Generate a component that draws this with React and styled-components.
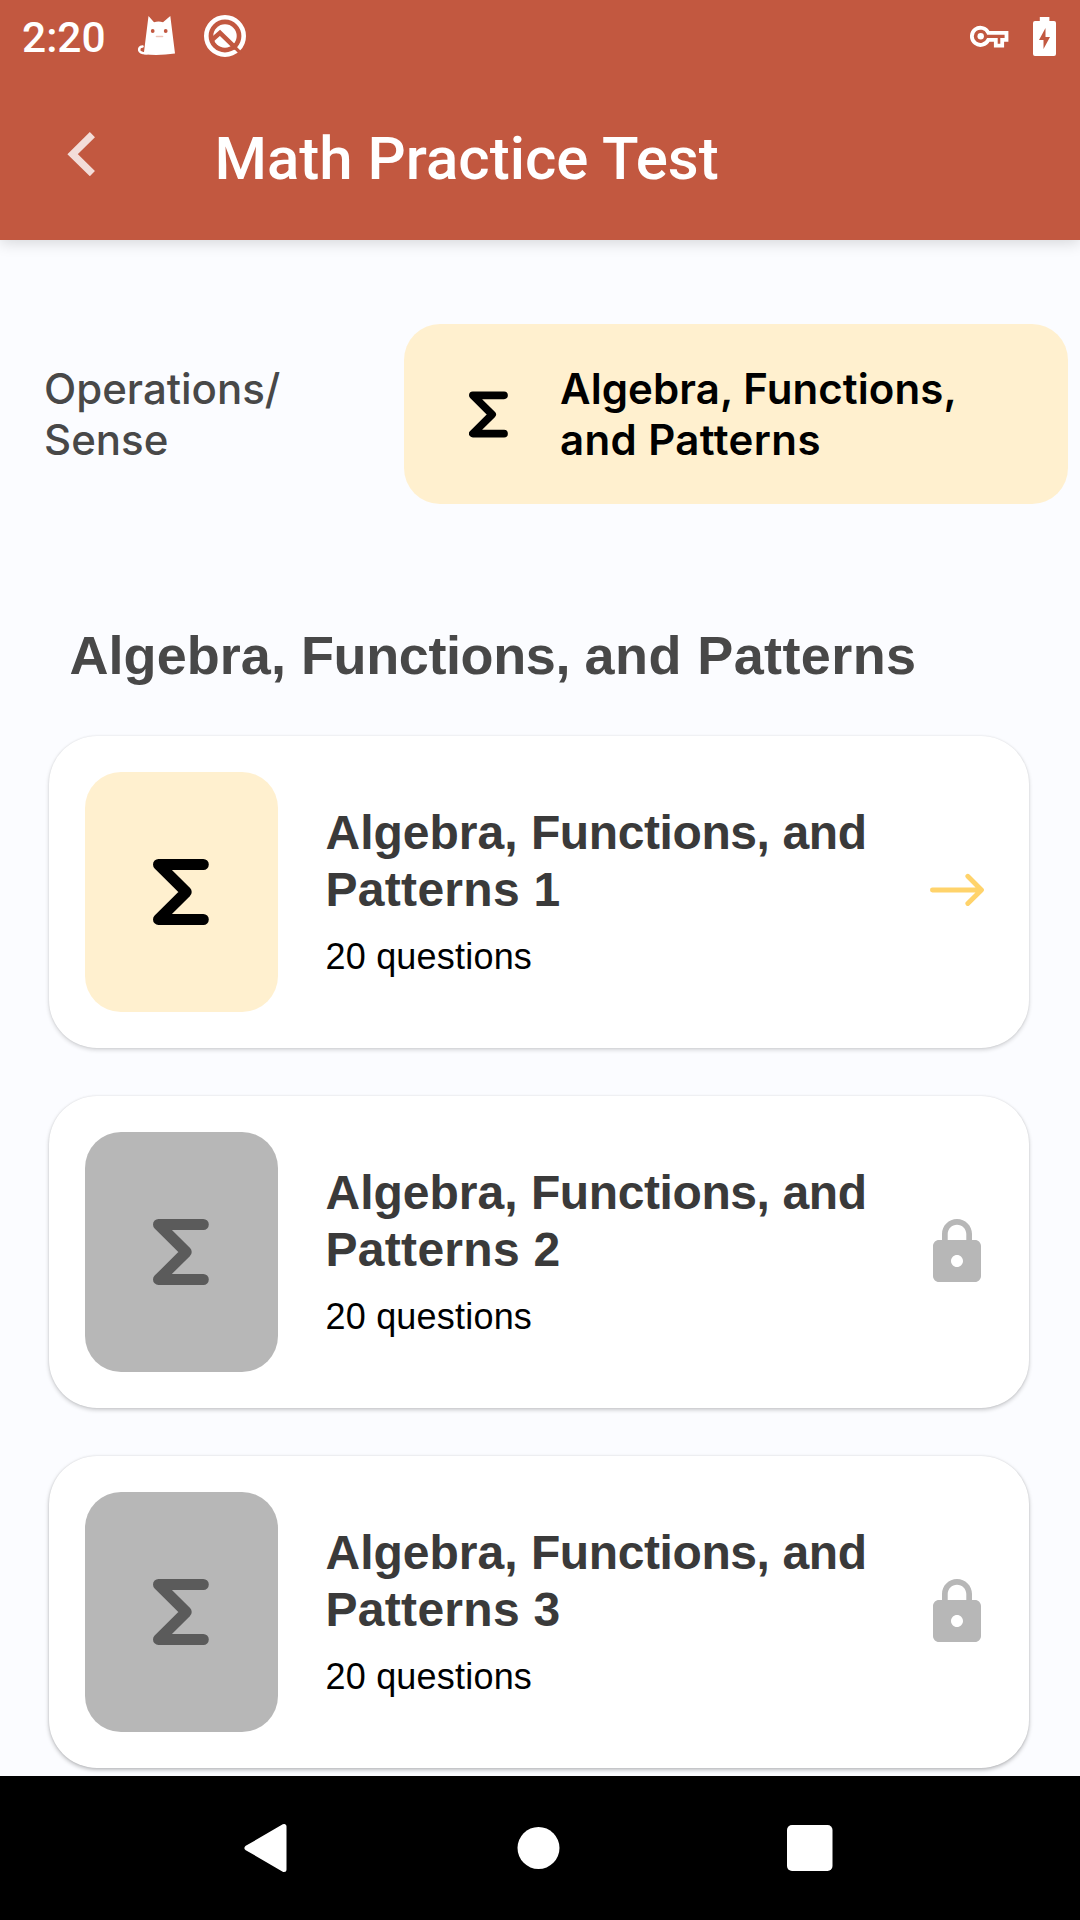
import React from "react";
import styled, { createGlobalStyle } from "styled-components";

const GlobalStyle = createGlobalStyle`
  * { box-sizing: border-box; }
  body { margin: 0; background: #fbfcff; }
`;

const Screen = styled.div`
  display: flex;
  flex-direction: column;
  width: 1080px;
  height: 1920px;
  overflow: hidden;
  background: #fbfcff;
  font-family: "Liberation Sans", Arial, sans-serif;
`;

const Header = styled.header`
  flex: none;
  height: 240px;
  background: #c25840;
  color: #fff;
  font-family: Roboto, sans-serif;
  font-weight: 500;
  box-shadow: 0 3px 14px rgba(0, 0, 0, 0.15);
  z-index: 1;
`;

const StatusBar = styled.div`
  display: flex;
  align-items: center;
  height: 72px;
  padding: 0 24px 0 22px;
`;

const Clock = styled.span`
  width: 115px;
  font-size: 42.5px;
  line-height: 72px;
  padding-top: 4px;
`;

const StatusIcons = styled.div`
  display: flex;
  align-items: center;
  gap: ${(p) => p.$gap}px;
  margin-left: ${(p) => (p.$end ? "auto" : 0)};
`;

const Toolbar = styled.div`
  display: flex;
  align-items: center;
  height: 168px;
  padding: 0 0 0 66px;
`;

const BackButton = styled.button`
  display: flex;
  width: 148.5px;
  padding: 0 0 4px;
  border: 0;
  background: none;
`;

const PageTitle = styled.h1`
  margin: 0;
  font-size: 60px;
  font-weight: 500;
  line-height: 70px;
  padding-top: 5px;
`;

const Content = styled.main`
  flex: 1;
  min-height: 0;
  overflow: hidden;
`;

const Tabs = styled.nav`
  display: flex;
  padding: 84px 12px 0 0;
  font-family: Inter, sans-serif;
  font-size: 42px;
  line-height: 51px;
`;

const Tab = styled.div`
  display: flex;
  align-items: center;
  flex: none;
  width: ${(p) => (p.$active ? 664 : 404)}px;
  height: 180px;
  padding-left: ${(p) => (p.$active ? 65 : 44)}px;
  gap: 52px;
  border-radius: 36px;
  background: ${(p) => (p.$active ? "#fff0cf" : "transparent")};
  color: ${(p) => (p.$active ? "#000" : "#484848")};
  font-weight: ${(p) => (p.$active ? 600 : 500)};
`;

const Tracked = styled.span`
  letter-spacing: ${(p) => p.$by}px;
`;

const SectionTitle = styled.h2`
  margin: 120px 0 0 69.5px;
  font-size: 54px;
  line-height: 62px;
  font-weight: 700;
  color: #484848;
  white-space: nowrap;
`;

const CardList = styled.div`
  display: flex;
  flex-direction: column;
  gap: 48px;
  padding: 50px 51px 0 49px;
`;

const Card = styled.article`
  display: flex;
  align-items: center;
  flex: none;
  height: 312px;
  padding: 0 36px;
  border-radius: 48px;
  background: #fff;
  box-shadow: 0 0 2px rgba(0, 0, 0, 0.1), 0 2px 4px rgba(0, 0, 0, ${(p) => p.$depth});
`;

const Tile = styled.div`
  display: flex;
  align-items: center;
  justify-content: center;
  flex: none;
  width: 192.5px;
  height: 240px;
  border-radius: 36px;
  background: ${(p) => (p.$locked ? "#b7b7b7" : "#fff0cf")};
  color: ${(p) => (p.$locked ? "#5b5b5b" : "#000")};
`;

const CardText = styled.div`
  flex: 1;
  padding-left: 48px;
`;

const CardTitle = styled.h3`
  margin: -3px 0 0;
  font-size: 48px;
  line-height: 57px;
  font-weight: 700;
  color: #3a3a3a;
  white-space: nowrap;
`;

const CardMeta = styled.p`
  margin: 0;
  padding-top: 18px;
  font-size: 36px;
  line-height: 42px;
  letter-spacing: 0.2px;
  color: #000;
`;

const CardAction = styled.div`
  display: flex;
  justify-content: center;
  flex: none;
  width: 72px;
  padding-bottom: ${(p) => (p.$raised ? 4 : 0)}px;
`;

const NavBar = styled.footer`
  display: flex;
  align-items: center;
  justify-content: space-between;
  flex: none;
  height: 144px;
  padding: 0 247px 0 243px;
  background: #000;
`;

const Sigma = ({ width, height }) => (
  <svg width={width} height={height} viewBox="0 0 56 66" fill="none" stroke="currentColor" strokeWidth="11" strokeLinecap="round" strokeLinejoin="round">
    <path d="M50.3 5.5H5.500L33.200 33L5.500 60.5H50.3" />
  </svg>
);

const CatIcon = () => (
  <svg width="40" height="42" viewBox="0 0 40 42">
    <path d="M7 37 11.5 1 17 7.2Q21.500 5.800 26 7.200L33.300 1 38 38.500Q22 41 7 39.300Z" fill="#fff" />
    <path d="M5.500 31.500Q1.500 32 2.300 35.500 3.200 38.600 10 38.200" fill="none" stroke="#fff" strokeWidth="2.600" strokeLinecap="round" />
    <circle cx="15.700" cy="16" r="1.900" fill="#c25840" />
    <circle cx="28.700" cy="16" r="1.900" fill="#c25840" />
    <path d="M19.500 21.500h6" stroke="#edc5bb" strokeWidth="1.600" strokeLinecap="round" />
  </svg>
);

const QIcon = () => (
  <svg width="44" height="44" viewBox="0 0 44 44">
    <circle cx="22" cy="22" r="18.700" fill="none" stroke="#fff" strokeWidth="4.600" />
    <circle cx="22" cy="22" r="11.700" fill="#fff" />
    <path d="M8 26.800 17 18.800 33 34.300" fill="none" stroke="#c25840" strokeWidth="4.600" />
    <path d="M31 32.500 38 39.500" stroke="#c25840" strokeWidth="3.200" />
  </svg>
);

const KeyIcon = () => (
  <svg width="39" height="24" viewBox="0 0 39 24">
    <path d="M18.300 8.800H36.500V15.900H32.200V21.700H25.800V15.900H18.300A8.600 8.600 0 1 1 18.300 8.800Z" fill="none" stroke="#fff" strokeWidth="3.800" />
    <circle cx="10.700" cy="12.300" r="3.200" fill="#fff" />
  </svg>
);

const BatteryIcon = () => (
  <svg width="23" height="39" viewBox="0 0 23 39">
    <path d="M6.800 0h9.600v4H21q2 0 2 2v31q0 2-2 2H2q-2 0-2-2V6q0-2 2-2h4.800Z" fill="#fff" />
    <path d="M12.500 11v9h4.500L10.500 32v-9H6Z" fill="#c25840" />
  </svg>
);

const BackIcon = () => (
  <svg width="30" height="44" viewBox="0 0 30 44">
    <path d="M26.400 2.600 6.600 22.200 26.400 41.600" fill="none" stroke="#fff" strokeOpacity="0.800" strokeWidth="7.300" />
  </svg>
);

const ArrowIcon = () => (
  <svg width="56" height="34" viewBox="0 0 56 34" fill="none" stroke="#ffd36b" strokeWidth="4.800" strokeLinecap="round" strokeLinejoin="round">
    <path d="M3.400 17H52M38.800 3.200 52.500 17 38.800 30.500" />
  </svg>
);

const LockIcon = () => (
  <svg width="72" height="72" viewBox="0 0 24 24" fill="#b7b7b7">
    <path d="M18 8h-1V6c0-2.760-2.240-5-5-5S7 3.240 7 6v2H6c-1.100 0-2 .9-2 2v10c0 1.100.9 2 2 2h12c1.100 0 2-.9 2-2V10c0-1.100-.9-2-2-2zm-6 9c-1.100 0-2-.9-2-2s.9-2 2-2 2 .9 2 2-.9 2-2 2zm3.100-9H8.900V6c0-1.710 1.390-3.100 3.100-3.100 1.710 0 3.100 1.390 3.100 3.100v2z" />
  </svg>
);

const tests = [
  { number: 1, locked: false, depth: 0.16 },
  { number: 2, locked: true, depth: 0.2 },
  { number: 3, locked: true, depth: 0.26 },
];

export default function App() {
  return (
    <Screen>
      <GlobalStyle />
      <Header>
        <StatusBar>
          <Clock>2:20</Clock>
          <StatusIcons $gap={26}>
            <CatIcon />
            <QIcon />
          </StatusIcons>
          <StatusIcons $gap={24} $end>
            <KeyIcon />
            <BatteryIcon />
          </StatusIcons>
        </StatusBar>
        <Toolbar>
          <BackButton aria-label="Back"><BackIcon /></BackButton>
          <PageTitle>Math Practice Test</PageTitle>
        </Toolbar>
      </Header>
      <Content>
        <Tabs>
          <Tab><span>Operations/<br />Sense</span></Tab>
          <Tab $active>
            <Sigma width={39} height={47} />
            <span>
              <Tracked $by={0.1}>Algebra, Functions,</Tracked>
              <br />
              <Tracked $by={0.4}>and Patterns</Tracked>
            </span>
          </Tab>
        </Tabs>
        <SectionTitle>
          <Tracked $by={0.05}>Algebra, </Tracked>
          <Tracked $by={-0.4}>Functions, </Tracked>
          <Tracked $by={0.4}>and Patterns</Tracked>
        </SectionTitle>
        <CardList>
          {tests.map((t) => (
            <Card key={t.number} $depth={t.depth}>
              <Tile $locked={t.locked}><Sigma width={56} height={66} /></Tile>
              <CardText>
                <CardTitle>
                  <Tracked $by={0}>Algebra, </Tracked>
                  <Tracked $by={-0.4}>Functions, and</Tracked>
                  <br />
                  <Tracked $by={0.3}>Patterns {t.number}</Tracked>
                </CardTitle>
                <CardMeta>20 questions</CardMeta>
              </CardText>
              <CardAction $raised={!t.locked}>{t.locked ? <LockIcon /> : <ArrowIcon />}</CardAction>
            </Card>
          ))}
        </CardList>
      </Content>
      <NavBar>
        <svg width="46" height="50" viewBox="0 0 46 50"><path d="M41 3.500V46.500L4 25Z" fill="#fff" stroke="#fff" strokeWidth="5" strokeLinejoin="round" /></svg>
        <svg width="44" height="44" viewBox="0 0 44 44"><circle cx="22.500" cy="22" r="21" fill="#fff" /></svg>
        <svg width="46" height="46" viewBox="0 0 46 46"><rect width="45.500" height="46" rx="5" fill="#fff" /></svg>
      </NavBar>
    </Screen>
  );
}
